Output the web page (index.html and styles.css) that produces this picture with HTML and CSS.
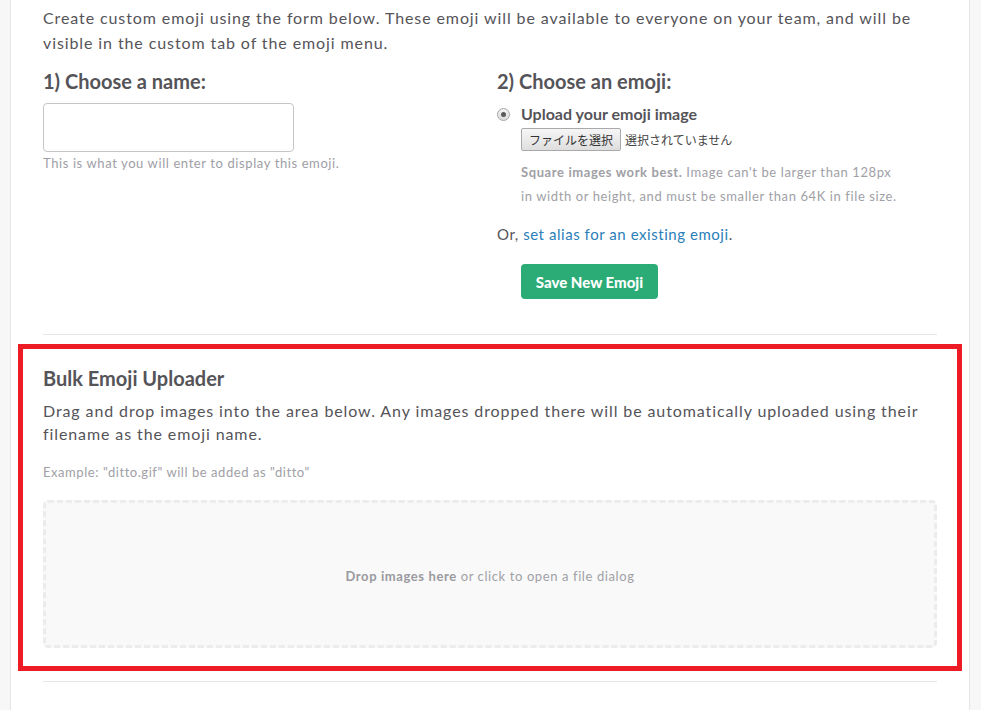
FILE: index.html
```html
<!DOCTYPE html>
<html lang="en">
<head>
<meta charset="utf-8">
<title>Custom Emoji</title>
<link rel="stylesheet" href="styles.css">
</head>
<body>
<div class="panel">
  <p class="intro">Create custom emoji using the form below. These emoji will be available to everyone on your team, and will be visible in the custom tab of the emoji menu.</p>

  <div class="cols">
    <div class="col">
      <h3 class="step">1) Choose a name:</h3>
      <div class="input"></div>
      <p class="hint">This is what you will enter to display this emoji.</p>
    </div>
    <div class="col">
      <h3 class="step">2) Choose an emoji:</h3>
      <div class="radio-row">
        <span class="radio"><span class="dot"></span></span>
        <span class="radio-label">Upload your emoji image</span>
      </div>
      <div class="sub">
        <div class="file-row">
          <span class="file-btn">ファイルを選択</span>
          <span class="file-none">選択されていません</span>
        </div>
        <p class="help"><strong>Square images work best.</strong> Image can't be larger than 128px in width or height, and must be smaller than 64K in file size.</p>
      </div>
      <p class="alias">Or, <a href="#">set alias for an existing emoji</a>.</p>
      <div class="sub">
        <span class="save-btn">Save New Emoji</span>
      </div>
    </div>
  </div>

  <hr class="rule rule-top">

  <section class="bulk">
    <h3 class="bulk-title">Bulk Emoji Uploader</h3>
    <p class="bulk-desc">Drag and drop images into the area below. Any images dropped there will be automatically uploaded using their filename as the emoji name.</p>
    <p class="example">Example: "ditto.gif" will be added as "ditto"</p>
    <div class="dropzone"><span><strong>Drop images here</strong> or click to open a file dialog</span></div>
  </section>

  <hr class="rule rule-bottom">
</div>
</body>
</html>
```

FILE: styles.css
```css
html, body {
  margin: 0;
  padding: 0;
}
body {
  background: #f7f7f7;
  font-family: Lato, "Noto Sans", sans-serif;
  color: #555459;
  height: 710px;
  overflow: hidden;
}
.panel {
  margin: 0 11px 0 10px;
  background: #fff;
  border-left: 1px solid #e6e6e6;
  border-right: 1px solid #e6e6e6;
  padding: 5px 32px 40px 32px;
  min-height: 710px;
  box-sizing: border-box;
}
.intro {
  margin: 0;
  font-size: 16px;
  line-height: 25px;
  letter-spacing: 0.9px;
}
.cols {
  display: grid;
  grid-template-columns: 454px 1fr;
  margin-top: 14px;
}
.step {
  margin: 0;
  font-size: 20px;
  line-height: 24px;
  font-weight: 700;
}
.input {
  margin-top: 10px;
  width: 251px;
  height: 49px;
  box-sizing: border-box;
  border: 1px solid #c5c5c5;
  border-radius: 4px;
}
.hint {
  margin: 2px 0 0;
  font-size: 13px;
  line-height: 18px;
  color: #9e9ea6;
  letter-spacing: 0.6px;
}
.radio-row {
  display: flex;
  align-items: center;
  margin-top: 11px;
  height: 20px;
}
.radio {
  width: 11px;
  height: 11px;
  border: 1px solid #a6a6a6;
  border-radius: 50%;
  background: linear-gradient(#f2f2f2, #dcdcdc);
  display: flex;
  align-items: center;
  justify-content: center;
  margin-right: 11px;
}
.dot {
  width: 5px;
  height: 5px;
  border-radius: 50%;
  background: #5a5a5a;
}
.radio-label {
  font-size: 16px;
  font-weight: 700;
  line-height: 20px;
}
.sub {
  padding-left: 24px;
}
.file-row {
  display: flex;
  align-items: center;
  margin-top: 4px;
  font-family: "Noto Sans CJK JP", "Noto Sans", sans-serif;
  font-size: 12px;
}
.file-btn {
  height: 23px;
  box-sizing: border-box;
  padding: 0 7px;
  border: 1px solid #a9a9a9;
  border-radius: 2px;
  background: linear-gradient(#f6f6f6, #dedede);
  color: #333;
  display: flex;
  align-items: center;
}
.file-none {
  margin-left: 4px;
  color: #444;
}
.help {
  margin: 9px 0 0;
  width: 385px;
  font-size: 13px;
  line-height: 24px;
  color: #a0a0a6;
  letter-spacing: 0.6px;
}
.help strong {
  font-weight: 700;
}
.alias {
  margin: 16px 0 0;
  font-size: 15px;
  line-height: 20px;
  letter-spacing: 0.55px;
}
.alias a {
  color: #2a80b9;
  text-decoration: none;
}
.save-btn {
  display: inline-flex;
  align-items: center;
  justify-content: center;
  margin-top: 20px;
  width: 137px;
  height: 35px;
  background: #2bac76;
  border-radius: 4px;
  color: #fff;
  font-weight: 900;
  font-size: 15px;
}
.rule {
  border: 0;
  height: 1px;
  background: #e6e6e6;
  margin: 0;
}
.rule-top {
  margin-top: 35px;
}
.bulk {
  margin: 9px -25px 0;
  border: 5px solid #ed1c24;
  padding: 17px 20px 18px;
}
.bulk-title {
  margin: 0;
  font-size: 20px;
  line-height: 24px;
  font-weight: 700;
}
.bulk-desc {
  margin: 9px 0 0;
  font-size: 16px;
  line-height: 23px;
  letter-spacing: 0.9px;
}
.example {
  margin: 18px 0 0;
  font-size: 13px;
  line-height: 18px;
  color: #a0a0a6;
  letter-spacing: 0.55px;
}
.dropzone {
  margin-top: 19px;
  height: 148px;
  box-sizing: border-box;
  border: 3px dashed #ececec;
  border-radius: 5px;
  background: #f9f9f9;
  display: flex;
  align-items: center;
  justify-content: center;
  padding-top: 4px;
  font-size: 13px;
  color: #a0a0a6;
  letter-spacing: 0.6px;
}
.dropzone strong {
  font-weight: 700;
  color: #9a9aa0;
}
.rule-bottom {
  margin-top: 10px;
}
```
